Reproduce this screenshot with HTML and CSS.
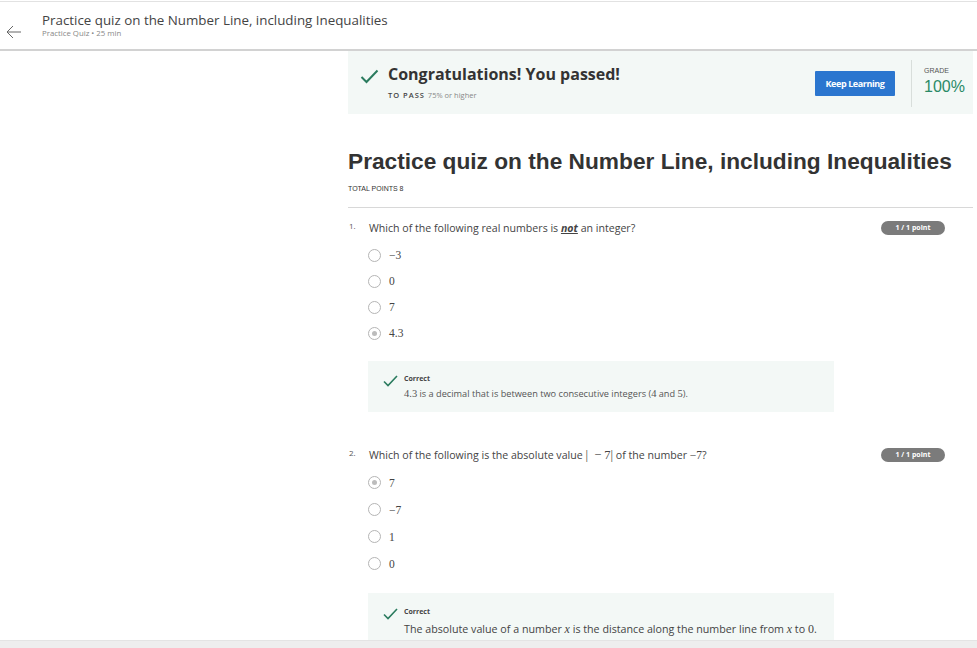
FILE: index.html
```html
<!DOCTYPE html>
<html>
<head>
<meta charset="utf-8">
<link rel="stylesheet" href="styles.css">
</head>
<body>
<header class="topbar">
  <div class="back">
    <svg width="16" height="14" viewBox="0 0 16 14"><path d="M15 7H1.5M7 1L1 7l6 6" fill="none" stroke="#666" stroke-width="1"/></svg>
  </div>
  <div class="top-titles">
    <div class="top-title">Practice quiz on the Number Line, including Inequalities</div>
    <div class="top-sub">Practice Quiz • 25 min</div>
  </div>
</header>
<div class="page">
  <aside class="side"></aside>
  <main class="main">
    <section class="banner">
      <svg class="banner-check" width="19" height="15" viewBox="0 0 19 15"><path d="M1.5 8l5 5L17.5 1.5" fill="none" stroke="#2a7b5e" stroke-width="2"/></svg>
      <div class="banner-text">
        <div class="congrats">Congratulations! You passed!</div>
        <div class="topass"><span class="tp-label">TO PASS</span> <span class="tp-val">75% or higher</span></div>
      </div>
      <button class="keep">Keep Learning</button>
      <div class="grade">
        <div class="grade-label">GRADE</div>
        <div class="grade-val">100%</div>
      </div>
    </section>

    <h1 class="quiz-title">Practice quiz on the Number Line, including Inequalities</h1>
    <div class="total">TOTAL POINTS 8</div>
    <hr class="rule">

    <section class="question">
      <div class="q-head">
        <span class="q-num">1.</span>
        <span class="q-text">Which of the following real numbers is <b class="not">not</b> an integer?</span>
        <span class="badge">1 / 1 point</span>
      </div>
      <ul class="opts">
        <li><span class="radio"></span><span class="math">−3</span></li>
        <li><span class="radio"></span><span class="math">0</span></li>
        <li><span class="radio"></span><span class="math">7</span></li>
        <li><span class="radio on"></span><span class="math">4.3</span></li>
      </ul>
      <div class="feedback">
        <svg class="fb-check" width="15" height="12" viewBox="0 0 15 12"><path d="M1 6.5l4 4L14 1" fill="none" stroke="#2a7b5e" stroke-width="1.6"/></svg>
        <div class="fb-body">
          <div class="fb-title">Correct</div>
          <div class="fb-text"><span class="math">4.3</span> is a decimal that is between two consecutive integers (<span class="math">4</span> and <span class="math">5</span>).</div>
        </div>
      </div>
    </section>

    <section class="question q2">
      <div class="q-head">
        <span class="q-num">2.</span>
        <span class="q-text">Which of the following is the absolute value <span class="math abs">|&#8194;−&#8197;7|</span> of the number <span class="math">−7</span>?</span>
        <span class="badge">1 / 1 point</span>
      </div>
      <ul class="opts">
        <li><span class="radio on"></span><span class="math">7</span></li>
        <li><span class="radio"></span><span class="math">−7</span></li>
        <li><span class="radio"></span><span class="math">1</span></li>
        <li><span class="radio"></span><span class="math">0</span></li>
      </ul>
      <div class="feedback">
        <svg class="fb-check" width="15" height="12" viewBox="0 0 15 12"><path d="M1 6.5l4 4L14 1" fill="none" stroke="#2a7b5e" stroke-width="1.6"/></svg>
        <div class="fb-body">
          <div class="fb-title">Correct</div>
          <div class="fb-text fb-big">The absolute value of a number <i class="math">x</i> is the distance along the number line from <i class="math">x</i> to <span class="math">0</span>.</div>
        </div>
      </div>
    </section>
  </main>
</div>
<div class="bottombar"></div>
</body>
</html>
```

FILE: styles.css
```css
html, body {
  margin: 0;
  padding: 0;
  background: #fff;
  font-family: "Open Sans", "Noto Sans", sans-serif;
  color: #333;
  overflow: hidden;
  height: 648px;
}

.topbar {
  margin-top: 1px;
  border-top: 1px solid #e2e2e2;
  border-bottom: 2px solid #d2d2d2;
  height: 47px;
  display: flex;
  align-items: flex-start;
}
.back {
  width: 42px;
  padding: 20px 0 0 6px;
  box-sizing: border-box;
}
.top-titles {
  padding-top: 9px;
}
.top-title {
  font-size: 13.35px;
  line-height: 18px;
  color: #444;
}
.top-sub {
  font-size: 7.8px;
  color: #888;
  line-height: 9px;
}

.page {
  display: flex;
}
.side {
  width: 348px;
  flex: none;
}
.main {
  width: 625px;
  flex: none;
}

.banner {
  background: #f3f8f6;
  height: 63px;
  display: flex;
  align-items: flex-start;
  box-sizing: border-box;
}
.banner-check {
  margin: 18px 0 0 12px;
}
.banner-text {
  margin-left: 9px;
  padding-top: 11px;
  flex: 1;
}
.congrats {
  font-size: 16px;
  font-weight: 700;
  color: #333;
  line-height: 24px;
}
.topass {
  font-size: 7.5px;
  margin-top: 4px;
  line-height: 10px;
}
.tp-label {
  font-weight: 600;
  letter-spacing: 1px;
  color: #444;
}
.tp-val {
  color: #888;
  margin-left: 1px;
}
.keep {
  margin-top: 20px;
  width: 80px;
  height: 25px;
  border: none;
  border-radius: 1px;
  background: #2b76cf;
  color: #fff;
  font-family: "Open Sans", sans-serif;
  font-weight: 700;
  font-size: 9px;
  letter-spacing: -0.4px;
  padding: 0;
  flex: none;
}
.grade {
  flex: none;
  margin: 9px 0 0 16px;
  border-left: 1px solid #d8dedb;
  height: 47px;
  padding-left: 12px;
  width: 62px;
  padding-top: 6px;
  box-sizing: border-box;
}
.grade-label {
  font-family: "Liberation Sans", Arial, sans-serif;
  font-size: 7px;
  color: #555;
  line-height: 10px;
}
.grade-val {
  font-family: "Liberation Sans", Arial, sans-serif;
  font-size: 16px;
  color: #2a8a66;
  line-height: 20px;
  margin-top: 1px;
}

.quiz-title {
  font-family: "Liberation Sans", Arial, sans-serif;
  font-size: 22.7px;
  font-weight: 700;
  color: #333;
  margin: 34px 0 0 0;
  line-height: 26px;
}
.total {
  font-family: "Liberation Sans", Arial, sans-serif;
  font-size: 7px;
  color: #333;
  margin-top: 10px;
  line-height: 10px;
}
.rule {
  border: none;
  border-top: 1px solid #d8d8d8;
  margin: 13px 0 0 0;
  height: 0;
}

.question {
  padding-top: 12px;
}
.q2 {
  padding-top: 35px;
}
.q-head {
  display: flex;
  align-items: center;
  height: 16px;
}
.q-num {
  width: 20px;
  font-size: 8px;
  color: #555;
  padding-left: 1px;
  align-self: flex-start;
  line-height: 12px;
}
.q-text {
  flex: 1;
  font-size: 10.6px;
  color: #444;
  line-height: 16px;
}
.not {
  font-style: italic;
  text-decoration: underline;
  font-weight: 700;
}
.badge {
  margin-right: 28px;
  width: 64px;
  height: 14px;
  border-radius: 7px;
  background: #7b7b7b;
  color: #fff;
  font-size: 7px;
  font-weight: 700;
  text-align: center;
  line-height: 14px;
}

.math {
  font-family: "Liberation Serif", "Times New Roman", serif;
  font-size: 11.5px;
}
i.math {
  font-style: italic;
}
.abs {
  font-size: 12.5px;
}

.opts {
  list-style: none;
  margin: 6px 0 0 20px;
  padding: 0;
}
.opts li {
  height: 26px;
  display: flex;
  align-items: center;
  color: #555;
}
.q2 .opts li {
  height: 27px;
}
.radio {
  width: 11px;
  height: 11px;
  border: 1px solid #b5b5b5;
  border-radius: 50%;
  margin-right: 8px;
  position: relative;
  box-sizing: content-box;
  background: #fff;
}
.radio.on::after {
  content: "";
  position: absolute;
  left: 3px;
  top: 3px;
  width: 5px;
  height: 5px;
  border-radius: 50%;
  background: #bcbcbc;
}
.opts li .math {
  font-size: 11.5px;
  color: #444;
}

.feedback {
  margin: 15px 0 0 20px;
  width: 466px;
  height: 51px;
  background: #f3f8f6;
  display: flex;
  align-items: flex-start;
  box-sizing: border-box;
  padding: 13px 0 0 15px;
}
.q2 .feedback {
  margin-top: 16px;
  padding-top: 14px;
}
.fb-check {
  margin-top: 1px;
}
.fb-body {
  margin-left: 6px;
}
.fb-title {
  font-size: 7px;
  font-weight: 700;
  color: #444;
  line-height: 10px;
}
.fb-text {
  font-size: 9.2px;
  color: #555;
  margin-top: 4px;
  line-height: 12px;
}
.fb-text .math {
  font-size: 10.5px;
}
.fb-big {
  font-size: 10.7px;
  margin-top: 6px;
  color: #444;
}
.fb-big .math {
  font-size: 12px;
}

.bottombar {
  position: fixed;
  left: 0;
  right: 0;
  bottom: 0;
  height: 7px;
  background: #eeeeee;
  border-top: 1px solid #e4e4e4;
}
```
